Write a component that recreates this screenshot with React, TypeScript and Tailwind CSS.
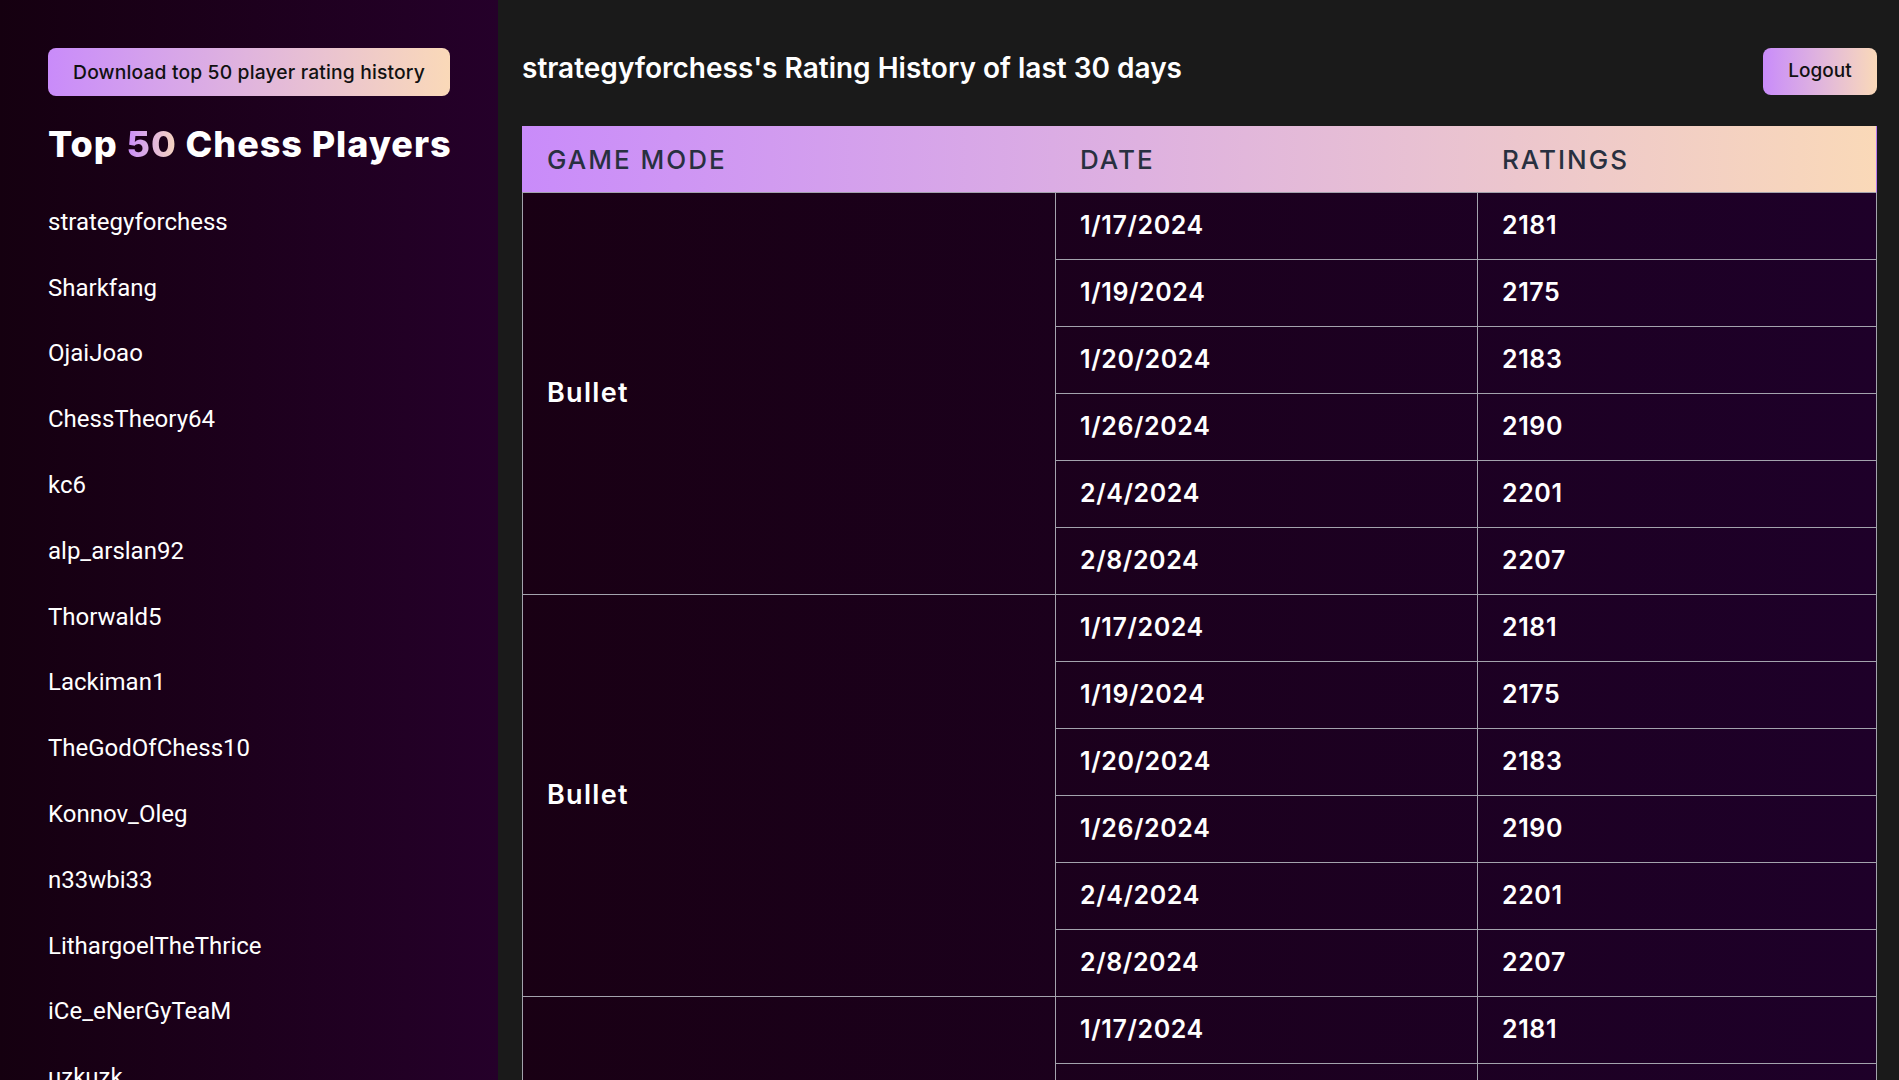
import React from "react";

const players = [
  "strategyforchess",
  "Sharkfang",
  "OjaiJoao",
  "ChessTheory64",
  "kc6",
  "alp_arslan92",
  "Thorwald5",
  "Lackiman1",
  "TheGodOfChess10",
  "Konnov_Oleg",
  "n33wbi33",
  "LithargoelTheThrice",
  "iCe_eNerGyTeaM",
  "uzkuzk",
];

const rows = [
  { date: "1/17/2024", rating: "2181" },
  { date: "1/19/2024", rating: "2175" },
  { date: "1/20/2024", rating: "2183" },
  { date: "1/26/2024", rating: "2190" },
  { date: "2/4/2024", rating: "2201" },
  { date: "2/8/2024", rating: "2207" },
];

const groups = ["Bullet", "Bullet", "Bullet"];

const mont = { fontFamily: "Inter, 'DejaVu Sans', sans-serif" };

export default function App() {
  return (
    <div className="flex h-screen w-full overflow-hidden bg-[#1a1a1a]" style={mont}>
      {/* Sidebar */}
      <aside className="w-[498px] shrink-0 h-full overflow-hidden bg-gradient-to-r from-[#150010] to-[#25002a] px-12 pt-12">
        <button className="h-12 w-full rounded-lg bg-gradient-to-r from-[#c98bfa] to-[#fad9b8] text-[19.3px] font-medium text-[#111] tracking-[0.15px]">
          Download top 50 player rating history
        </button>
        <h1 className="mt-7 text-[36px] leading-[40px] font-extrabold text-white tracking-[0.95px] whitespace-nowrap">
          Top{" "}
          <span className="bg-gradient-to-r from-[#c98bfa] to-[#f8d6bb] bg-clip-text text-transparent">50</span>{" "}
          Chess Players
        </h1>
        <ul className="mt-[25px]" style={{ fontFamily: "Roboto, 'Liberation Sans', sans-serif" }}>
          {players.map((p) => (
            <li key={p} className="h-[65.8px] flex items-center text-[24px] text-white whitespace-nowrap">
              {p}
            </li>
          ))}
        </ul>
      </aside>

      {/* Main */}
      <main className="flex-1 h-full overflow-hidden pl-6 pr-[22px] pt-12">
        <div className="flex items-start justify-between">
          <h2 className="mt-[3px] text-[28px] leading-[34px] font-semibold text-white">
            strategyforchess's Rating History of last 30 days
          </h2>
          <button className="h-[47px] w-[114px] rounded-lg bg-gradient-to-r from-[#c98bfa] to-[#fad9b8] text-[19px] font-medium text-[#111]">
            Logout
          </button>
        </div>

        <div className="mt-[31px] w-[1355px]">
          {/* Header */}
          <div className="flex h-[67px] border-b border-[#a3a3ad] bg-gradient-to-r from-[#c98bfa] to-[#fad9b8] border-r border-r-[#b77af0] text-[26px] font-medium text-[#283040] tracking-[2px]">
            <div className="w-[534px] pl-[25px] flex items-center">GAME MODE</div>
            <div className="w-[422px] pl-6 flex items-center">DATE</div>
            <div className="flex-1 pl-6 flex items-center">RATINGS</div>
          </div>

          {/* Body */}
          <div className="border-l border-r border-[#a3a3ad] bg-gradient-to-r from-[#190014] to-[#1e0029] text-white font-semibold text-[25px] tracking-[0.6px]">
            {groups.map((g, gi) => (
              <div key={gi} className="flex border-b border-[#a3a3ad]">
                <div className="w-[533px] border-r border-[#a3a3ad] pl-6 flex items-center text-[27px] tracking-[1.3px]">
                  {g}
                </div>
                <div className="flex-1">
                  {rows.map((r, ri) => (
                    <div
                      key={ri}
                      className={
                        ri < rows.length - 1
                          ? "flex h-[67px] border-b border-[#a3a3ad]"
                          : "flex h-[66px]"
                      }
                    >
                      <div className="w-[422px] border-r border-[#a3a3ad] pl-6 flex items-center">
                        {r.date}
                      </div>
                      <div className="flex-1 pl-6 flex items-center">{r.rating}</div>
                    </div>
                  ))}
                </div>
              </div>
            ))}
          </div>
        </div>
      </main>
    </div>
  );
}
